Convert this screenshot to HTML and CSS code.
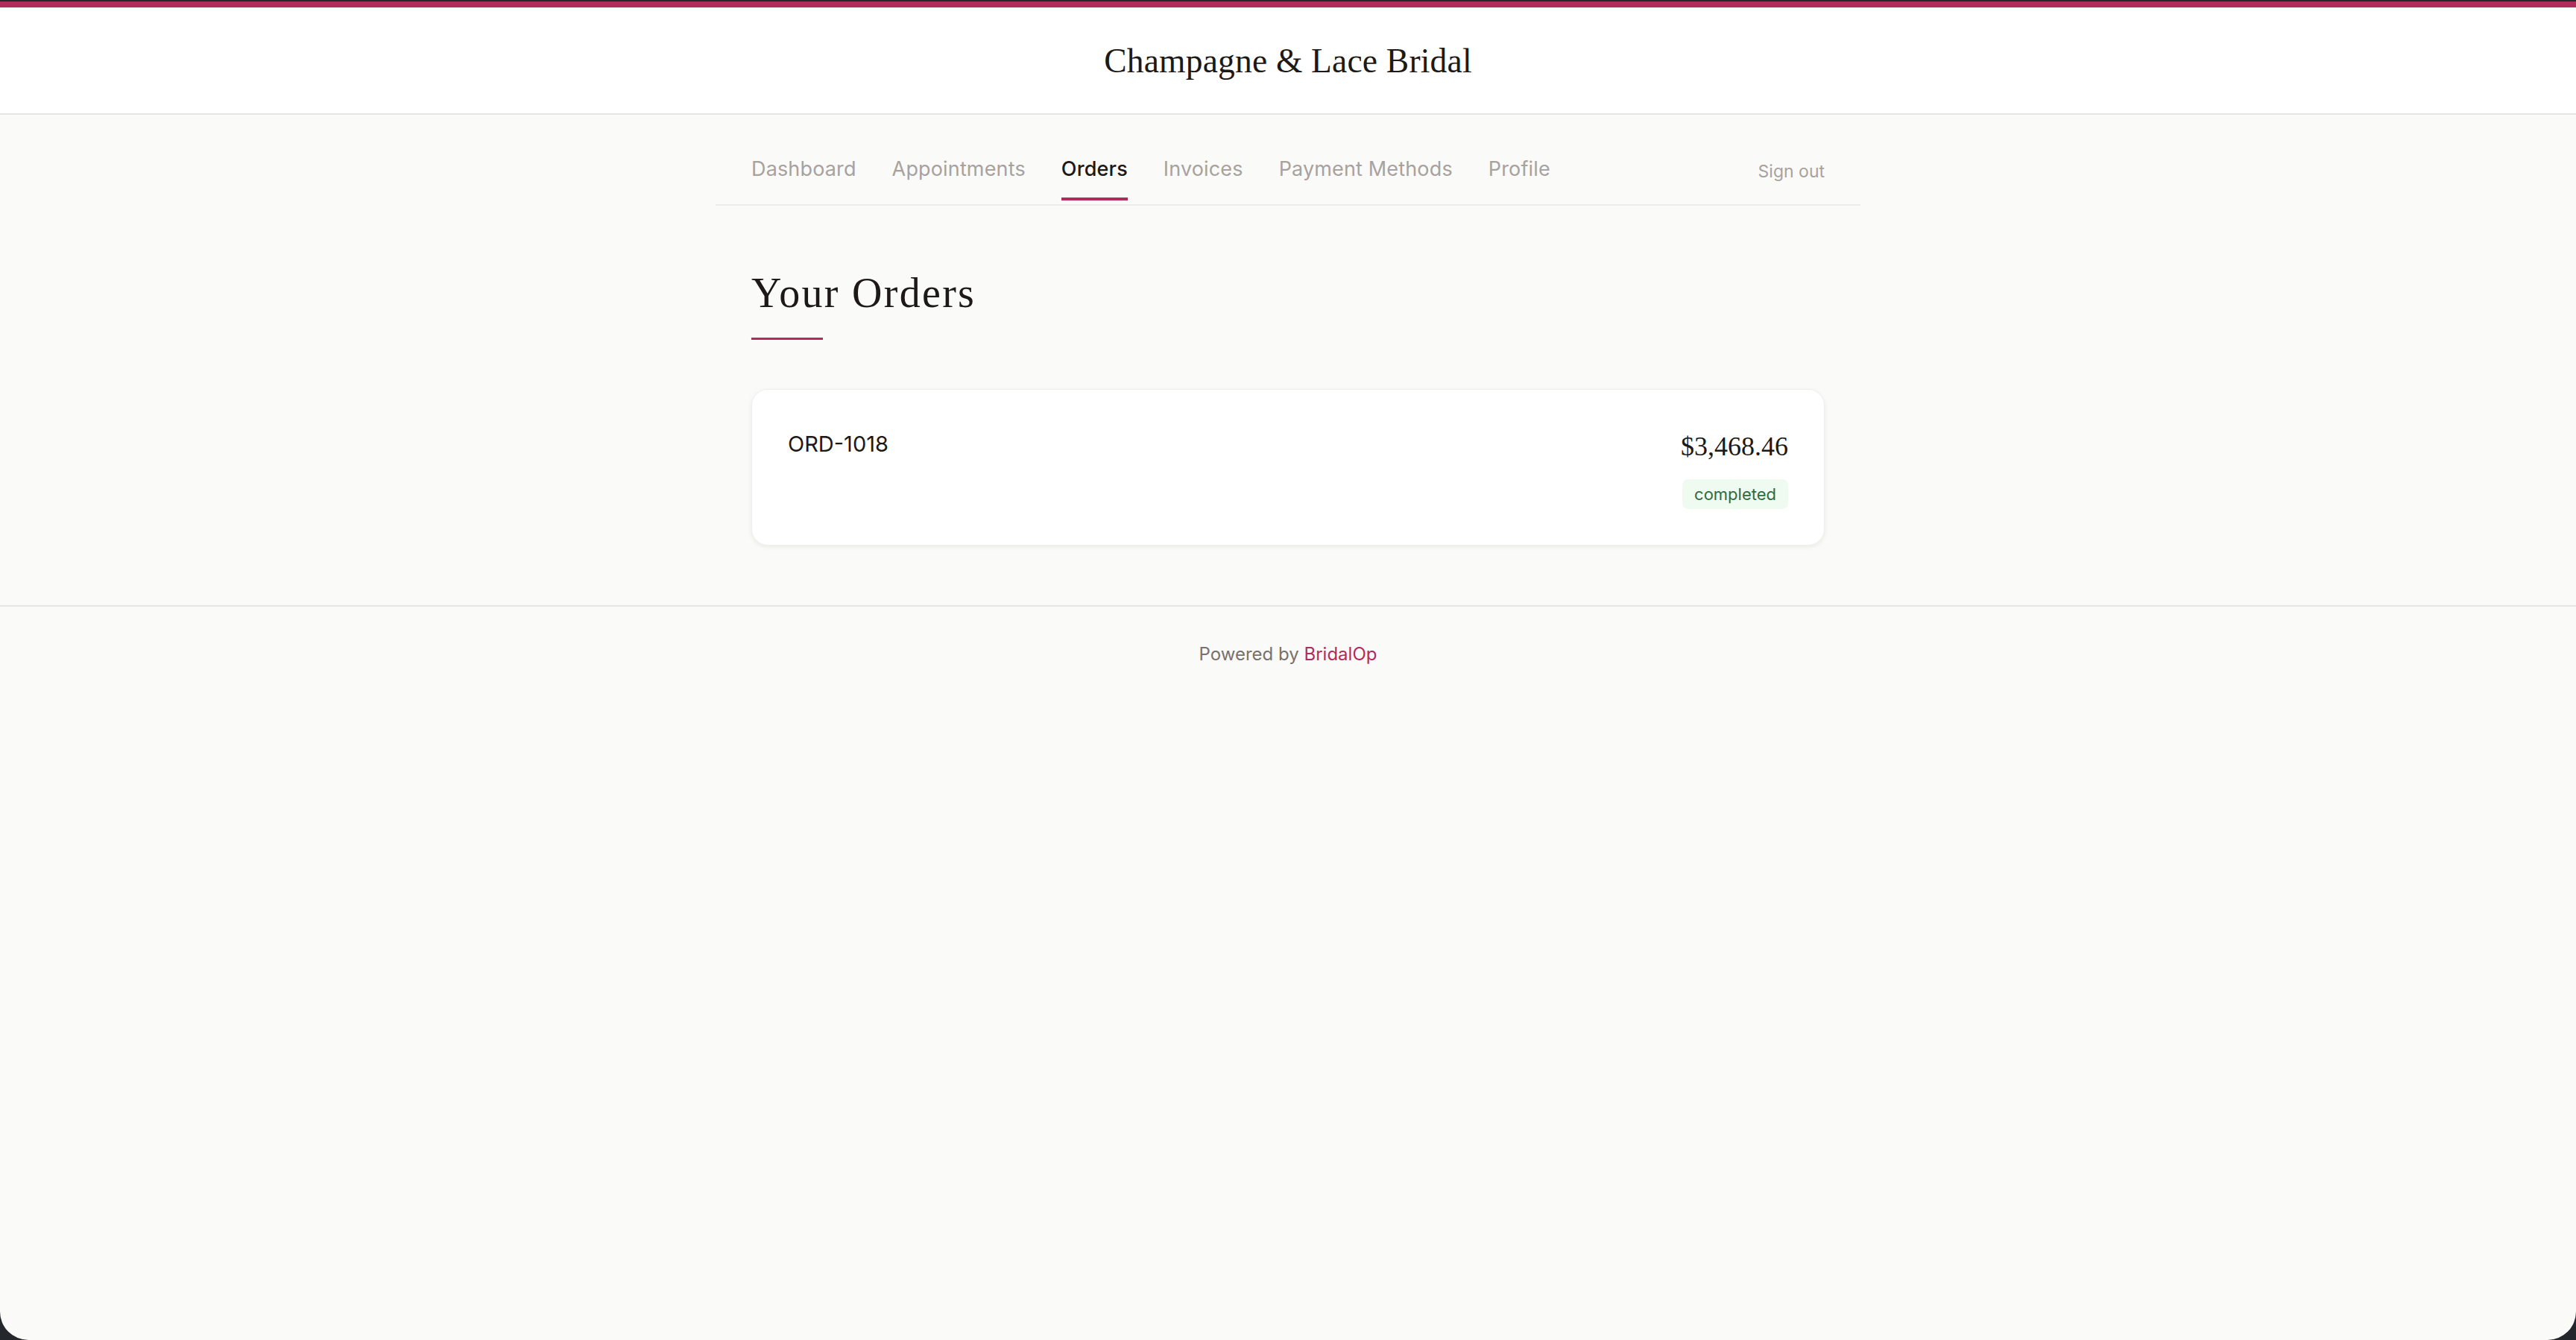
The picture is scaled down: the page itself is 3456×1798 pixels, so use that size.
FILE: index.html
```html
<!DOCTYPE html>
<html lang="en">
<head>
<meta charset="utf-8">
<title>Your Orders – Champagne &amp; Lace Bridal</title>
<link rel="stylesheet" href="styles.css">
</head>
<body>
<div class="window">
  <header class="site-header">
    <h1 class="brand">Champagne &amp; Lace Bridal</h1>
  </header>
  <div class="container">
    <nav class="tabs">
      <ul class="tab-list">
        <li><a class="tab" href="#">Dashboard</a></li>
        <li><a class="tab" href="#">Appointments</a></li>
        <li><a class="tab tab-active" href="#">Orders</a></li>
        <li><a class="tab" href="#">Invoices</a></li>
        <li><a class="tab" href="#">Payment Methods</a></li>
        <li><a class="tab" href="#">Profile</a></li>
      </ul>
      <a class="signout" href="#">Sign out</a>
    </nav>
    <main class="content">
      <h2 class="page-title">Your Orders</h2>
      <div class="title-rule"></div>
      <div class="order-card">
        <div class="order-id">ORD-1018</div>
        <div class="order-meta">
          <div class="order-total">$3,468.46</div>
          <span class="badge">completed</span>
        </div>
      </div>
    </main>
  </div>
  <footer class="site-footer">
    <p class="powered">Powered by <a class="powered-link" href="#">BridalOp</a></p>
  </footer>
</div>
</body>
</html>
```
FILE: styles.css
```css
html, body {
  margin: 0;
  padding: 0;
}
body {
  background: #24272b;
  font-family: Inter, "Noto Sans", "Liberation Sans", sans-serif;
  padding-top: 2px;
}
.window {
  height: calc(100vh - 2px);
  box-sizing: border-box;
  background: #fafaf9;
  border-top: 8px solid #b02c5c;
  border-radius: 0 0 38px 38px;
  overflow: hidden;
}
.site-header {
  background: #ffffff;
  height: 142px;
  display: flex;
  align-items: center;
  justify-content: center;
  border-bottom: 2px solid #e7e5e4;
}
.brand {
  margin: 0;
  font-family: "Liberation Serif", "DejaVu Serif", serif;
  font-weight: 400;
  font-size: 45.5px;
  line-height: 55px;
  color: #1c1917;
  letter-spacing: 0.2px;
}
.container {
  width: 1536px;
  margin: 0 auto;
}
.tabs {
  display: flex;
  align-items: center;
  justify-content: space-between;
  padding: 32px 48px 5px;
  border-bottom: 2px solid #eeedeb;
}
.tab-list {
  list-style: none;
  margin: 0;
  padding: 0;
  display: flex;
  gap: 48px;
}
.tab {
  display: block;
  padding: 21px 0 18px;
  border-bottom: 4px solid transparent;
  font-size: 27px;
  line-height: 40px;
  letter-spacing: 0.15px;
  color: #a8a29e;
  text-decoration: none;
}
.tab-active {
  color: #1c1917;
  font-weight: 500;
  border-bottom-color: #b02c5c;
}
.signout {
  font-size: 23px;
  line-height: 40px;
  color: #a8a29e;
  text-decoration: none;
  margin-top: 4px;
}
.content {
  padding: 84px 48px 80px;
}
.page-title {
  margin: 0 0 26px;
  font-family: "Liberation Serif", "DejaVu Serif", serif;
  font-weight: 400;
  font-size: 56px;
  line-height: 67px;
  letter-spacing: 2.3px;
  color: #1c1917;
}
.title-rule {
  width: 96px;
  height: 3px;
  background: #b02c5c;
  margin-bottom: 66px;
}
.order-card {
  display: flex;
  justify-content: space-between;
  align-items: flex-start;
  background: #ffffff;
  border: 1px solid #f0efed;
  border-radius: 22px;
  padding: 48px;
  box-shadow: 0 2px 6px rgba(0, 0, 0, 0.07);
}
.order-id {
  font-size: 29px;
  line-height: 46px;
  padding-top: 2px;
  color: #1c1917;
}
.order-meta {
  display: flex;
  flex-direction: column;
  align-items: flex-end;
}
.order-total {
  font-family: "Liberation Serif", "DejaVu Serif", serif;
  font-size: 36px;
  line-height: 56px;
  color: #1c1917;
  margin-bottom: 16px;
}
.badge {
  display: inline-block;
  padding: 4px 16px;
  font-size: 22px;
  line-height: 32px;
  color: #2f6b3d;
  background: #effaf1;
  border-radius: 8px;
}
.site-footer {
  border-top: 2px solid #e7e5e4;
  padding-top: 44px;
  text-align: center;
}
.powered {
  margin: 0;
  font-size: 24px;
  line-height: 40px;
  color: #78716c;
}
.powered-link {
  color: #b02c5c;
  text-decoration: none;
}
```
